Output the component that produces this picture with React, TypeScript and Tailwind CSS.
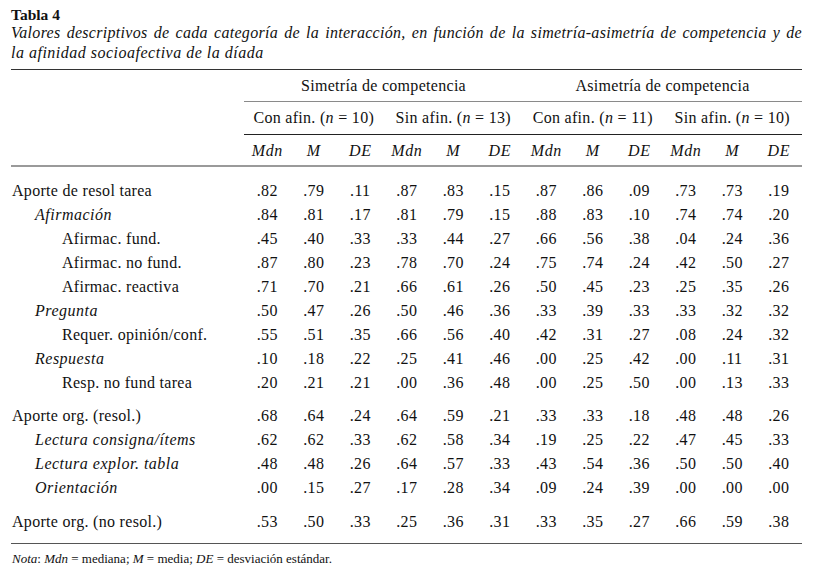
import React from 'react'

type Row = { label: string; lvl: number; v: string[] }

const groups: Row[][] = [
    [
        { label: 'Aporte de resol tarea', lvl: 0, v: ['.82', '.79', '.11', '.87', '.83', '.15', '.87', '.86', '.09', '.73', '.73', '.19'] },
        { label: 'Afirmación', lvl: 1, v: ['.84', '.81', '.17', '.81', '.79', '.15', '.88', '.83', '.10', '.74', '.74', '.20'] },
        { label: 'Afirmac. fund.', lvl: 2, v: ['.45', '.40', '.33', '.33', '.44', '.27', '.66', '.56', '.38', '.04', '.24', '.36'] },
        { label: 'Afirmac. no fund.', lvl: 2, v: ['.87', '.80', '.23', '.78', '.70', '.24', '.75', '.74', '.24', '.42', '.50', '.27'] },
        { label: 'Afirmac. reactiva', lvl: 2, v: ['.71', '.70', '.21', '.66', '.61', '.26', '.50', '.45', '.23', '.25', '.35', '.26'] },
        { label: 'Pregunta', lvl: 1, v: ['.50', '.47', '.26', '.50', '.46', '.36', '.33', '.39', '.33', '.33', '.32', '.32'] },
        { label: 'Requer. opinión/conf.', lvl: 2, v: ['.55', '.51', '.35', '.66', '.56', '.40', '.42', '.31', '.27', '.08', '.24', '.32'] },
        { label: 'Respuesta', lvl: 1, v: ['.10', '.18', '.22', '.25', '.41', '.46', '.00', '.25', '.42', '.00', '.11', '.31'] },
        { label: 'Resp. no fund tarea', lvl: 2, v: ['.20', '.21', '.21', '.00', '.36', '.48', '.00', '.25', '.50', '.00', '.13', '.33'] },
    ],
    [
        { label: 'Aporte org. (resol.)', lvl: 0, v: ['.68', '.64', '.24', '.64', '.59', '.21', '.33', '.33', '.18', '.48', '.48', '.26'] },
        { label: 'Lectura consigna/ítems', lvl: 1, v: ['.62', '.62', '.33', '.62', '.58', '.34', '.19', '.25', '.22', '.47', '.45', '.33'] },
        { label: 'Lectura explor. tabla', lvl: 1, v: ['.48', '.48', '.26', '.64', '.57', '.33', '.43', '.54', '.36', '.50', '.50', '.40'] },
        { label: 'Orientación', lvl: 1, v: ['.00', '.15', '.27', '.17', '.28', '.34', '.09', '.24', '.39', '.00', '.00', '.00'] },
    ],
    [
        { label: 'Aporte org. (no resol.)', lvl: 0, v: ['.53', '.50', '.33', '.25', '.36', '.31', '.33', '.35', '.27', '.66', '.59', '.38'] },
    ],
]

const subgroups = [
    { name: 'Con afin.', n: '10' },
    { name: 'Sin afin.', n: '13' },
    { name: 'Con afin.', n: '11' },
    { name: 'Sin afin.', n: '10' },
]

const gridCols = 'grid grid-cols-[233px_repeat(12,46.5px)]'

function BodyRow({ row }: { row: Row }) {
    const labelCls =
        row.lvl === 0
            ? 'pl-[1px]'
            : row.lvl === 1
                ? 'pl-[24px] italic tracking-[0.5px]'
                : 'pl-[51px]'
    return (
        <div className={`${gridCols} h-[24px] leading-[24px]`}>
            <div className={`whitespace-nowrap ${labelCls}`}>{row.label}</div>
            {row.v.map((x, i) => (
                <div key={i} className="text-center">{x}</div>
            ))}
        </div>
    )
}

export default function App() {
    return (
        <div className="min-h-screen w-full bg-white font-['Liberation_Serif','Times_New_Roman',serif] text-[#111]">
            <div className="ml-[11px] w-[791px] pt-[6px]">
                <div className="text-[15.5px] font-bold leading-[17px]">Tabla 4</div>
                <div className="text-[16px] italic leading-[20px] tracking-[0.3px]">
                    <span className="block whitespace-nowrap text-justify [text-align-last:justify]">
                        Valores descriptivos de cada categoría de la interacción, en función de la simetría-asimetría de competencia y de
                    </span>
                    <span className="block tracking-[0.5px]">la afinidad socioafectiva de la díada</span>
                </div>

                <div className="mt-[6px] border-t border-[#333] text-[16px] tracking-[0.3px]">
                    {/* header */}
                    <div className={gridCols}>
                        <div className="row-span-3 border-b-2 border-[#9a9a9a]" />
                        <div className="col-span-6 flex h-[32px] items-center justify-center border-b border-[#8a8a8a] leading-[24px]">
                            Simetría de competencia
                        </div>
                        <div className="col-span-6 flex h-[32px] items-center justify-center border-b border-[#8a8a8a] leading-[24px]">
                            Asimetría de competencia
                        </div>
                        {subgroups.map((s, i) => (
                            <div
                                key={i}
                                className="col-span-3 flex h-[33px] items-center justify-center border-b border-[#222] leading-[24px] whitespace-nowrap"
                            >
                                {s.name} (<span className="italic">n</span>&nbsp;=&nbsp;{s.n})
                            </div>
                        ))}
                        {subgroups.flatMap((_, g) =>
                            ['Mdn', 'M', 'DE'].map((h) => (
                                <div
                                    key={`${g}-${h}`}
                                    className="flex h-[32px] items-center justify-center border-b-2 border-[#9a9a9a] pt-[1px] italic leading-[24px] tracking-[0.5px]"
                                >
                                    {h}
                                </div>
                            ))
                        )}
                    </div>

                    {/* body */}
                    <div className="border-b border-[#555] pt-[12px] pb-[9px]">
                        {groups.map((g, gi) => (
                            <div key={gi} className={gi === 1 ? 'mt-[9px]' : gi === 2 ? 'mt-[10px]' : ''}>
                                {g.map((r, ri) => (
                                    <BodyRow key={ri} row={r} />
                                ))}
                            </div>
                        ))}
                    </div>
                </div>

                <div className="mt-[7px] pl-[1px] text-[13px] leading-[16px]">
                    <span className="italic">Nota</span>: <span className="italic">Mdn</span> = mediana;{' '}
                    <span className="italic">M</span> = media; <span className="italic">DE</span> = desviación estándar.
                </div>
            </div>
        </div>
    )
}
